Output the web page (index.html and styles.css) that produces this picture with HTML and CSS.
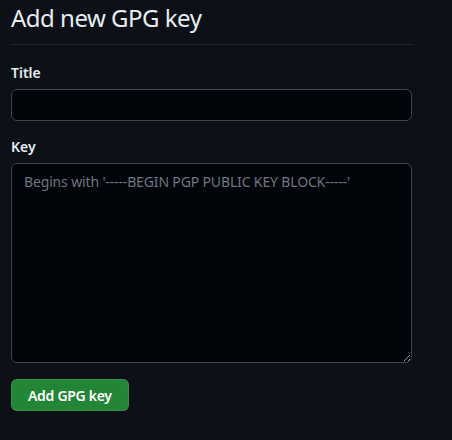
FILE: index.html
```html
<!DOCTYPE html>
<html lang="en">
<head>
    <meta charset="UTF-8">
    <meta name="viewport" content="width=device-width, initial-scale=1.0">
    <title>Add new GPG key</title>
    <link rel="stylesheet" href="styles.css">
</head>
<body>
    <div class="subhead">
        <h2 class="subhead-heading">Add new GPG key</h2>
    </div>
    <form id="gpgForm">
        <div class="form-group">
            <label for="title">Title</label>
            <input type="text" id="title" name="title">
        </div>
        <div class="form-group">
            <label for="key">Key</label>
            <textarea id="key" name="key" placeholder="Begins with '-----BEGIN PGP PUBLIC KEY BLOCK-----'"></textarea>
        </div>
        <button type="submit" class="btn-primary">Add GPG key</button>
    </form>
</body>
</html>
```

FILE: styles.css
```css
body {
    font-family: "Noto Sans", "Open Sans", sans-serif;
    font-size: 14px;
    line-height: 1.5;
    color: #e6edf3;
    background-color: #0d1117;
    margin: 0;
    padding: 0 40px 0 11px;
}
.subhead {
    border-bottom: 1px solid #21262d;
    padding-bottom: 8px;
    width: 401px;
}
.subhead-heading {
    font-size: 24px;
    font-weight: 400;
    line-height: 36px;
    letter-spacing: -0.5px;
    margin: 0;
}
form {
    width: 401px;
}
.form-group {
    margin-top: 17px;
}
.form-group + .form-group {
    margin-top: 15px;
}
label {
    display: block;
    font-weight: 600;
    margin-bottom: 6px;
}
input[type="text"], textarea {
    display: block;
    width: 100%;
    box-sizing: border-box;
    background-color: #010409;
    color: #e6edf3;
    border: 1px solid #3d444d;
    border-radius: 6px;
    font-family: inherit;
    font-size: 14px;
    line-height: 20px;
    letter-spacing: -0.15px;
    padding: 5px 12px;
    outline: none;
}
input[type="text"] {
    height: 32px;
}
textarea {
    height: 200px;
    padding-top: 8px;
    resize: vertical;
}
textarea::placeholder {
    color: #6e7681;
}
.btn-primary {
    margin-top: 16px;
    height: 32px;
    padding: 0 16px;
    font-family: inherit;
    font-size: 14px;
    font-weight: 600;
    letter-spacing: -0.3px;
    color: #ffffff;
    background-color: #238636;
    border: 1px solid rgba(240, 246, 252, 0.1);
    border-radius: 6px;
    cursor: pointer;
}
```
